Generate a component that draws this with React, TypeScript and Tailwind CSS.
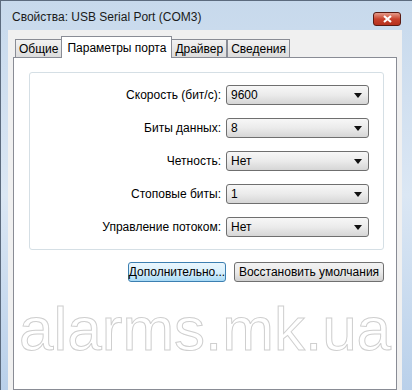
import React from "react";

const rows = [
  { label: "Скорость (бит/с):", value: "9600" },
  { label: "Биты данных:", value: "8" },
  { label: "Четность:", value: "Нет" },
  { label: "Стоповые биты:", value: "1" },
  { label: "Управление потоком:", value: "Нет" },
];

const tabs = ["Общие", "Параметры порта", "Драйвер", "Сведения"];

function Combo({ value }: { value: string }) {
  return (
    <div className="flex h-[20px] w-[143px] items-center rounded-[3px] border border-[#6f6f6f] bg-gradient-to-b from-[#f7f7f7] via-[#ebebeb] to-[#d6d6d6] pl-[4px] pr-[6px]">
      <span className="flex-1 text-[12px] text-black">{value}</span>
      <svg width="8" height="5" viewBox="0 0 8 5">
        <path d="M0 0 H8 L4 5 Z" fill="#111" />
      </svg>
    </div>
  );
}

export default function App() {
  return (
    <div
      className="relative flex h-[390px] w-[412px] flex-col overflow-hidden border-l border-t border-[#5c6b7e] bg-gradient-to-b from-[#c7d9ec] via-[#dbe7f4] to-[#b9d0ea]"
      style={{ fontFamily: '"Liberation Sans", Arial, sans-serif' }}
    >
      {/* title bar */}
      <div className="flex h-[29px] shrink-0 items-center pl-[11px] pr-[11px]">
        <span className="mt-[2px] text-[12px] text-[#1a1a1a]">Свойства: USB Serial Port (COM3)</span>
        <div className="ml-auto mt-[7px] flex h-[14px] w-[28px] items-center justify-center rounded-[3px] border border-[#5a1a12] bg-gradient-to-b from-[#e59a8a] via-[#c8412c] to-[#b6301d]">
          <svg width="9" height="8" viewBox="0 0 9 8">
            <path d="M1 1 L8 7 M8 1 L1 7" stroke="#fff" strokeWidth="2.2" />
          </svg>
        </div>
      </div>

      {/* client area */}
      <div className="ml-[7px] mr-[10px] flex flex-1 flex-col bg-[#f0f0f0] pl-[5px] pr-[5px] pt-[6px]">
        {/* tabs */}
        <div className="flex items-end pl-[2px] text-[12px] text-black">
          {tabs.map((t, i) =>
            i === 1 ? (
              <div
                key={t}
                className="relative z-10 -mb-px -ml-px -mr-px h-[22px] border border-b-0 border-[#898c95] bg-white px-[5px] pt-[2px]"
              >
                {t}
              </div>
            ) : (
              <div
                key={t}
                className="h-[18px] border border-b-0 border-[#898c95] bg-gradient-to-b from-[#f2f2f2] to-[#dcdcdc] px-[3px] leading-[18px]"
              >
                {t}
              </div>
            )
          )}
        </div>

        {/* tab page */}
        <div className="flex flex-1 flex-col border border-[#898c95] bg-white pl-[15px] pr-[12px] pt-[14px]">
          <div className="flex flex-col gap-[13px] rounded-[3px] border border-[#d5dfe5] pb-[12px] pt-[12px]">
            {rows.map((r) => (
              <div key={r.label} className="flex items-center">
                <span className="w-[196px] pr-[5px] text-right text-[12px] text-black">{r.label}</span>
                <Combo value={r.value} />
              </div>
            ))}
          </div>

          <div className="mt-[12px] flex justify-end gap-[8px] text-[12px] text-black">
            <div className="flex h-[20px] w-[98px] items-center justify-center rounded-[3px] border border-[#3c7fb1] bg-gradient-to-b from-[#eaf6fd] via-[#d9f0fc] to-[#a7d9f5]">
              Дополнительно...
            </div>
            <div className="flex h-[20px] w-[150px] items-center justify-center rounded-[3px] border border-[#707070] bg-gradient-to-b from-[#f2f2f2] via-[#ebebeb] to-[#d0d0d0]">
              Восстановить умолчания
            </div>
          </div>

          <div className="-ml-[10px] mt-[12px] text-center text-[62px] leading-[70px] text-white [-webkit-text-stroke:1px_#cfcfcf]">
            alarms.mk.ua
          </div>
        </div>
      </div>
    </div>
  );
}
